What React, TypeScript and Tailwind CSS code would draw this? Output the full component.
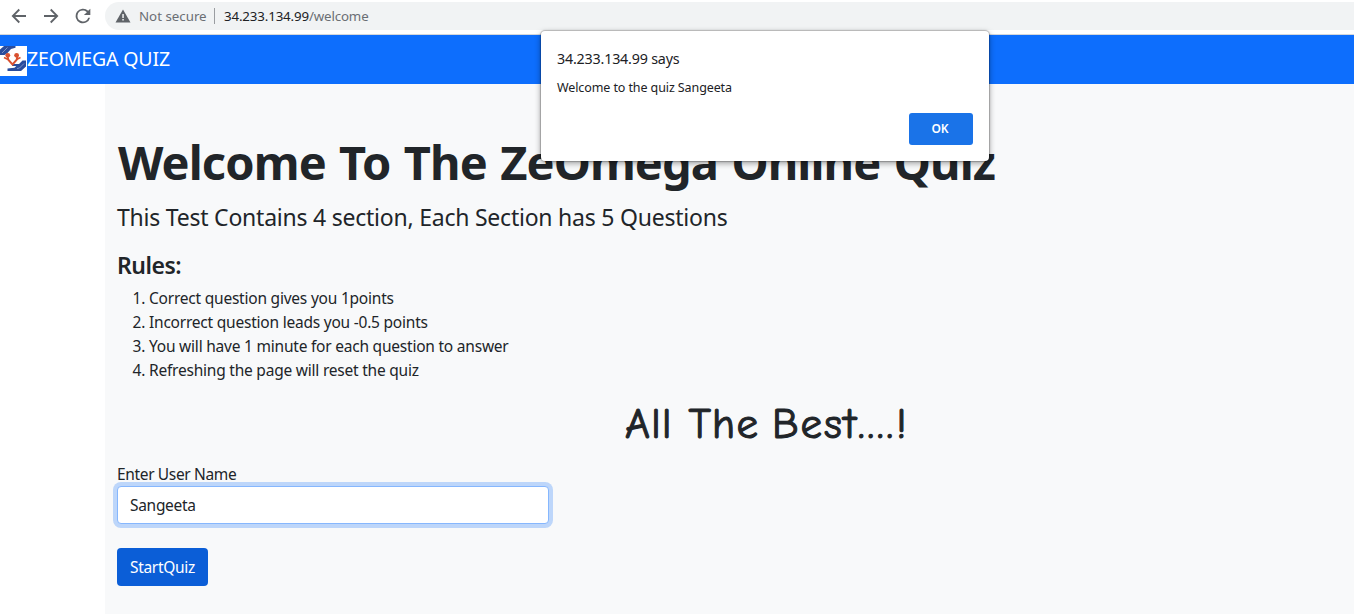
import React from "react";

const rules: string[] = [
  "Correct question gives you 1points",
  "Incorrect question leads you -0.5 points",
  "You will have 1 minute for each question to answer",
  "Refreshing the page will reset the quiz",
];

function BrowserBar() {
  return (
    <div className="flex h-[35px] items-start border-b border-[#d5d7da] bg-white">
      <div className="flex h-8 shrink-0 items-center gap-2 pl-[7px] text-[#5f6368]">
        <svg width="24" height="24" viewBox="0 0 24 24" fill="none" stroke="currentColor" strokeWidth="1.800">
          <path d="M19 12H6M12.3 5.5 5.8 12l6.500 6.500" />
        </svg>
        <svg width="24" height="24" viewBox="0 0 24 24" fill="none" stroke="currentColor" strokeWidth="1.800">
          <path d="M5 12h13M11.700 5.500 18.200 12l-6.500 6.500" />
        </svg>
        <svg width="22" height="22" viewBox="0 0 24 24" fill="currentColor" className="ml-px">
          <path d="M17.650 6.350A8 8 0 1 0 19.730 14h-2.080A6 6 0 1 1 12 6c1.660 0 3.140.69 4.220 1.780L13 11h7V4z" />
        </svg>
      </div>
      <div className="ml-[11px] mt-[2px] flex h-7 flex-1 items-center rounded-l-full bg-[#f1f3f4] pl-[10px]">
        <svg width="16" height="14" viewBox="0 0 16 14">
          <path d="M8 0.500 15.500 13.500H.5z" fill="#5f6368" />
          <path d="M7.300 5h1.500v4H7.300zM7.300 10h1.500v1.600H7.300z" fill="#f1f3f4" />
        </svg>
        <span className="ml-2 mt-px w-[68px] whitespace-nowrap text-[13.300px] text-[#6a6e73]">Not secure</span>
        <span className="ml-[7px] h-4 w-px bg-[#9a9da1]" />
        <span className="ml-[9px] mt-px whitespace-nowrap text-[13.300px] tracking-[-0.14px] text-[#202124]">
          34.233.134.99<span className="text-[#6a6e73]">/welcome</span>
        </span>
      </div>
    </div>
  );
}

function Logo() {
  return (
    <svg width="27" height="30" viewBox="0 0 27 30" className="shrink-0">
      <path d="M0 0h27v30H0z" fill="#fff" />
      <path d="M4 0h11.500v1.800L11 3 7 7.500 4.500 9H0V3.500z" fill="#2a4c9c" />
      <path d="M2 7 7.500 1.500" stroke="#9fb0d8" strokeWidth="0.700" />
      <path d="M26 14.500v6l-5 4.500H7.500v-2.500l7-.7 1.800-1.800H12v-2h7l3.500-3.500z" fill="#2a4c9c" />
      <path d="M17 22.500l2.500-.5 4.500-4.500" stroke="#9fb0d8" strokeWidth="0.700" fill="none" />
      <path d="M7.500 10.500 8.500 14l4 4.500 4-4.500 1-3.500" stroke="#d9502f" strokeWidth="1.900" fill="none" />
      <path d="M4 11.500l4 2M20.500 11.500l-4 2" stroke="#d9502f" strokeWidth="1.500" />
      <circle cx="7.800" cy="9.300" r="2.400" fill="#d9502f" />
      <circle cx="16.600" cy="9.300" r="2.400" fill="#d9502f" />
    </svg>
  );
}

function Alert() {
  return (
    <div className="absolute left-[541px] top-[31px] h-[130px] w-[448px] rounded-[4px] bg-white px-4 pt-4 text-[#202124] shadow-[0_0_1px_1px_rgba(0,0,0,0.22),0_2px_6px_rgba(0,0,0,0.4)]">
      <div className="h-6 whitespace-nowrap text-[14.300px] leading-[23px] tracking-[-0.2px]">34.233.134.99 says</div>
      <div className="mt-[7px] h-5 whitespace-nowrap text-[12.500px] leading-5 tracking-[-0.1px]">
        Welcome to the quiz Sangeeta
      </div>
      <div className="mt-[15px] flex justify-end">
        <button className="h-8 w-16 rounded-[3px] bg-[#1a73e8] pr-[2px] text-xs font-semibold text-white">OK</button>
      </div>
    </div>
  );
}

export default function App() {
  return (
    <div className="relative h-[614px] w-full overflow-hidden bg-white font-['Noto_Sans','Open_Sans',sans-serif] text-[#212529]">
      <BrowserBar />
      <nav className="flex h-[49px] items-center bg-[#0d6efd] pt-[3px] text-white">
        <Logo />
        <span className="mb-[5px] whitespace-nowrap text-[19.500px] leading-[30px] tracking-[-0.15px]">
          ZEOMEGA QUIZ
        </span>
      </nav>
      <main className="ml-[105px] h-[530px] bg-[#f8f9fa] pl-3 pt-[49px]">
        <h1 className="whitespace-nowrap pl-px text-[47px] font-bold leading-[58px] tracking-[-0.9px] [word-spacing:2px]">
          Welcome To The ZeOmega Online Quiz
        </h1>
        <p className="mt-3 whitespace-nowrap text-[23px] leading-[29px] tracking-[-0.23px]">
          This Test Contains 4 section, Each Section has 5 Questions
        </p>
        <h2 className="mt-[19px] text-[23px] font-semibold leading-[29px] tracking-[-0.5px]">Rules:</h2>
        <ol className="mt-[6px] list-decimal pl-8 text-[15.500px] leading-6 tracking-[-0.22px]">
          {rules.map((rule) => (
            <li key={rule}>{rule}</li>
          ))}
        </ol>
        <div className="mt-[18px] whitespace-nowrap pl-[508px] font-['Comic_Sans_MS','Comic_Neue',cursive] text-[43px] leading-[48px] tracking-[1.300px] [-webkit-text-stroke:1.1px_#212529]">
          All The <span className="-ml-[3px] tracking-[1.900px]">Best</span>
          <span className="tracking-[2.900px]">....!</span>
        </div>
        <label className="mt-[14px] block text-[15.500px] leading-6 tracking-[-0.35px]">Enter User Name</label>
        <input
          className="block h-[38px] w-[432px] rounded-[4px] border border-[#86b7fe] bg-white px-3 text-[15.500px] leading-6 tracking-[-0.3px] shadow-[0_0_0_4px_rgba(13,110,253,0.25)] outline-none"
          defaultValue="Sangeeta"
        />
        <button className="mt-6 h-[38px] w-[91px] rounded-[4px] bg-[#0b5ed7] pt-[2px] text-[15.500px] tracking-[-0.3px] text-white">
          StartQuiz
        </button>
      </main>
      <Alert />
    </div>
  );
}
